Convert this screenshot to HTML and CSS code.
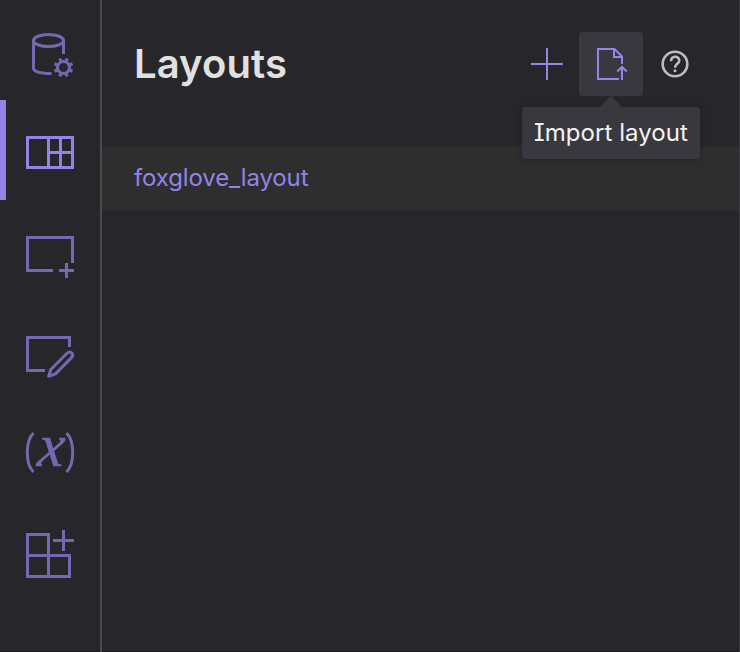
FILE: index.html
```html
<!DOCTYPE html>
<html lang="en">
<head>
<meta charset="utf-8">
<title>Layouts</title>
<link rel="stylesheet" href="styles.css">
</head>
<body>
<div class="app">
  <nav class="sidebar">
    <button class="tab" aria-label="Data source">
      <svg viewBox="0 0 100 100"><ellipse cx="48.5" cy="40.5" rx="15" ry="6"/><path d="M33.5 40.500V68C33.500 71.500 40 73.500 51.500 73.500M63.500 40.500V54"/><circle cx="63.500" cy="67.500" r="6"/><path class="teeth" d="M65.800 61.900L67.200 58.500M69.100 65.200L72.500 63.800M69.100 69.800L72.500 71.200M65.800 73.100L67.200 76.500M61.200 73.100L59.800 76.500M57.900 69.800L54.500 71.200M57.900 65.200L54.500 63.800M61.200 61.900L59.800 58.500"/></svg>
    </button>
    <button class="tab tab-active" aria-label="Layouts">
      <svg viewBox="0 0 100 100"><path d="M27.500 37.500H72.500V67.500H27.500ZM48.500 37.500V67.500M60.500 37.500V67.500M48.500 52.500H72.500"/></svg>
    </button>
    <button class="tab" aria-label="Add panel">
      <svg viewBox="0 0 100 100"><path d="M53 70.500H27.500V37.500H72.500V63M59 70.500H74M66.500 63V78"/></svg>
    </button>
    <button class="tab" aria-label="Panel settings">
      <svg viewBox="0 0 100 100"><path d="M45 70.500H27.500V37.500H69.500V47"/><path class="pencil" d="M48.700 76.300L50.800 69.500L67 53.300C70.300 50 74.600 54.200 71.500 57.600L55.500 73.900Z"/></svg>
    </button>
    <button class="tab" aria-label="Variables">
      <svg viewBox="0 0 100 100"><path class="paren" d="M33.500 33C25.200 41 25.200 64 33.500 72M66.500 33C74.800 41 74.800 64 66.500 72"/><text class="variable" transform="translate(36.500 65.500) skewX(-6) scale(.93 .95)">x</text></svg>
    </button>
    <button class="tab" aria-label="Extensions">
      <svg viewBox="0 0 100 100"><path d="M27.500 34.500H48.500V76.500H27.500ZM27.500 55.500H69.500V76.500H48.500M53 40.500H74M63.500 30V51"/></svg>
    </button>
  </nav>
  <main class="panel">
    <header class="header">
      <h1 class="title">Layouts</h1>
      <div class="actions">
        <button class="action" aria-label="Create new layout"><svg viewBox="0 0 64 64"><path d="M32 16V48M16 32H48"/></svg></button>
        <button class="action action-hover" aria-label="Import layout">
          <svg viewBox="0 0 64 64"><path d="M40 47H19V17H35.500L43 24.500V32M35 17V25H43M43 48V35M38.300 39.500L43 34.800L47.700 39.500"/></svg>
          <span class="tooltip">Import layout</span>
        </button>
        <button class="action action-help" aria-label="Help"><svg viewBox="0 0 64 64"><circle cx="32" cy="32" r="12.300"/><path d="M28 29.300C28 23.300 36.300 23.300 36.300 28.600C36.300 31.800 32 32 32 35.800"/><circle class="dot" cx="32" cy="38.700" r="1.500"/></svg></button>
      </div>
    </header>
    <div class="layout-row">foxglove_layout</div>
  </main>
</div>
</body>
</html>
```
FILE: styles.css
```css
* { box-sizing: border-box; }
body { margin: 0; background: #27272b; font-family: Inter, sans-serif; }
button { border: 0; padding: 0; background: none; font: inherit; }
svg { display: block; width: 100%; height: 100%; fill: none; }
.app { display: flex; height: 652px; border-right: 1px solid #3b3b40; background: linear-gradient(#211c20, #211c20) bottom / 100% 1px no-repeat; }
.sidebar { display: flex; flex: 0 0 102px; flex-direction: column; border-right: 2px solid #4c4b52; }
.tab { width: 100px; height: 100px; color: #7468b0; }
.tab svg { stroke: currentColor; stroke-width: 3; }
.tab-active { color: #9283e7; box-shadow: inset 6px 0 #9283e7; }
.tab .teeth { stroke-width: 3.2; }
.tab .pencil { stroke-width: 3; stroke-linejoin: round; }
.tab .paren { stroke-width: 3; }
.variable { fill: currentColor; stroke: currentColor; stroke-width: .5; font: italic 64px "Liberation Serif", serif; }
.panel { flex: 1; min-width: 0; }
.header { display: flex; align-items: center; justify-content: space-between; height: 146px; padding: 0 32px 18px; }
.title { margin: 0; color: #e1e1e2; font-size: 40px; font-weight: 600; line-height: 48px; letter-spacing: .1px; }
.actions { display: flex; }
.action { position: relative; width: 64px; height: 64px; border-radius: 4px; color: #9586e8; }
.action svg { stroke: currentColor; stroke-width: 2; }
.action-hover { background: #39383e; }
.action-help { color: #bdbdbf; }
.action-help svg { stroke-width: 2.600; }
.action-help .dot { fill: currentColor; stroke: none; }
.tooltip { position: absolute; z-index: 1; top: 75px; left: 50%; width: 178px; height: 52px; transform: translateX(-50%); border-radius: 4px; background: #39383e; color: #f3f3f4; font-size: 24px; line-height: 51px; letter-spacing: .06px; text-align: center; white-space: nowrap; font-feature-settings: "cv08"; box-shadow: 0 2px 10px rgb(0 0 0 / 20%); }
.tooltip::before { content: ""; position: absolute; top: -11px; left: 78px; border: solid transparent; border-width: 0 11px 11px; border-bottom-color: #39383e; }
.layout-row { height: 64px; padding-left: 32px; background: #2e2e2e; color: #9283e7; font-size: 24px; line-height: 63px; letter-spacing: -.12px; }
```
